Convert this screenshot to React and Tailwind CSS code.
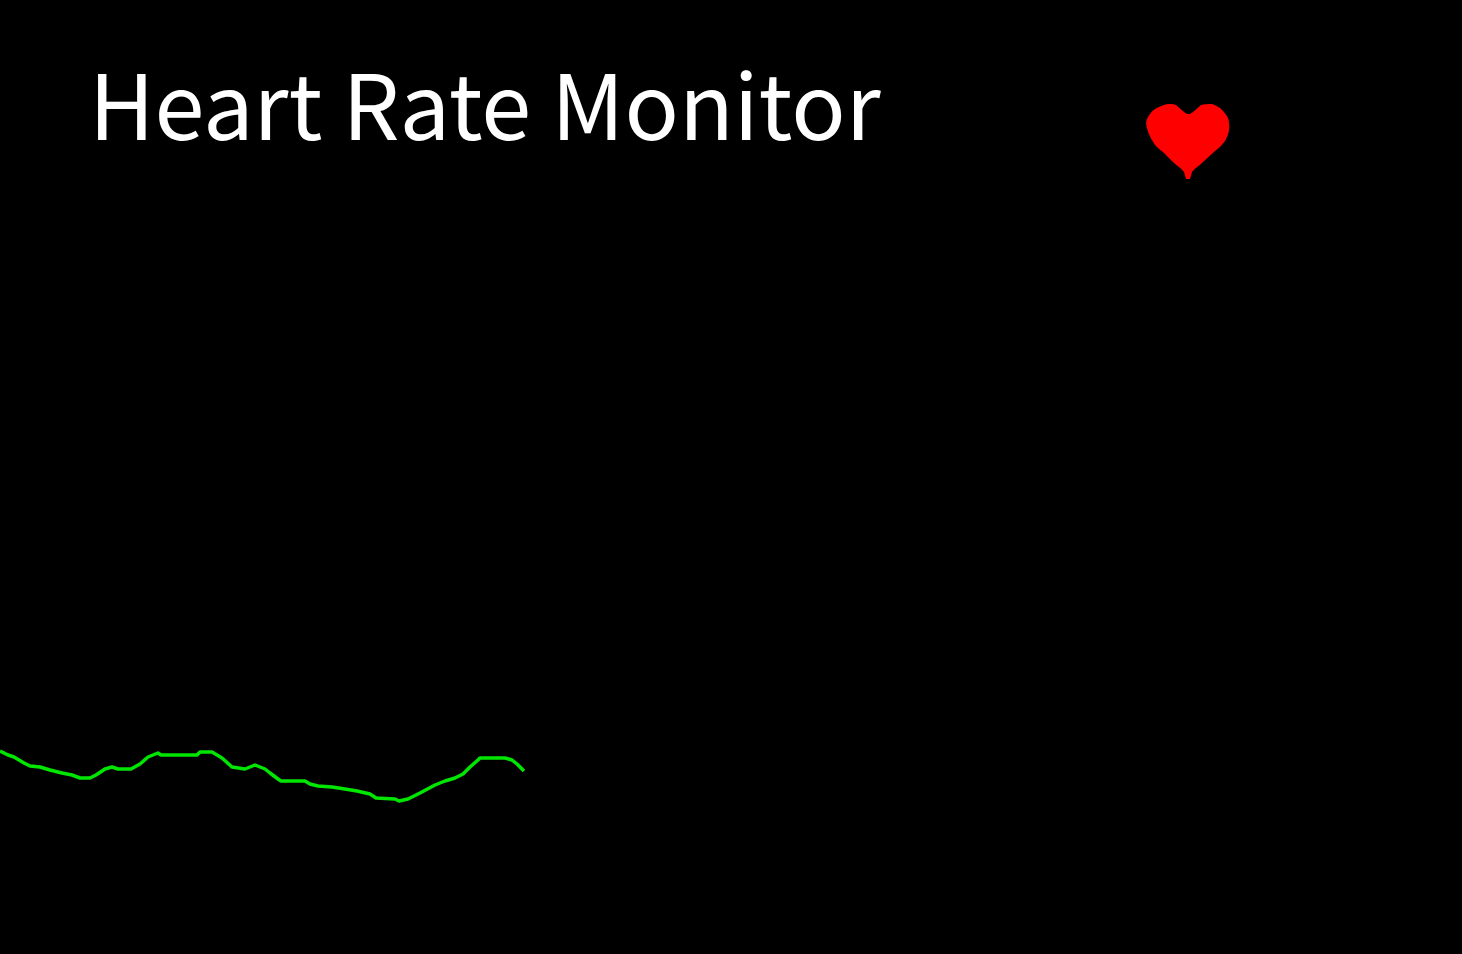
const linePoints = '0,751 8,755 14,757 24,763 30,766 40,767 50,770 62,773 72,775 80,778 90,778 96,775 105,769 112,767 118,769 131,769 140,764 148,757 158,753 161,755 197,755 200,752 212,752 222,758 232,767 245,769 255,765 265,769 270,773 278,779 281,781 305,781 310,784 318,786 332,787 345,789 357,791 370,794 376,798 395,799 399,801 408,799 420,793 435,785 445,781 455,778 463,774 470,767 478,760 480,758 505,758 512,760 517,764 524,771';

const HeartIcon = () => (
  <svg width="84" height="76" viewBox="0 0 84 76">
    <path
      fill="#ff0000"
      d="M0 19 C1 12 7 5 13 3 C17 1 20 0 23 0 C26 0 28 0 30 1 L38 8 L41 10 L44 10 L47 8 L55 1 C58 0 63 0 66 0 C69 1 71 2 74 4 C77 7 79 9 81 12 C82 14 83 16 83 19 C84 26 82 32 79 37 C76 41 73 44 69 47 C65 51 61 54 57 58 C53 62 49 64 46 68 L44 75 L40 75 L38 68 C35 64 31 62 27 58 C23 54 20 51 17 48 C14 46 12 44 10 42 C6 37 1 28 0 19 Z"
    />
  </svg>
);

const App = () => {
  return (
    <div className="w-full h-screen bg-black overflow-hidden flex flex-col">
      <header className="flex items-start h-[700px] pl-[89px] pt-[104px]">
        <h1 className="w-[1057px] -mt-[68px] text-[90px] leading-[130px] text-white font-normal whitespace-nowrap font-['Noto_Sans_CJK_JP',sans-serif]">
          Heart Rate Monitor
        </h1>
        <HeartIcon />
      </header>
      <svg width="530" height="120" viewBox="0 700 530 120" className="block">
        <polyline points={linePoints} fill="none" stroke="#00e600" strokeWidth="3.5" strokeLinejoin="round" />
      </svg>
    </div>
  );
};

export default App;
